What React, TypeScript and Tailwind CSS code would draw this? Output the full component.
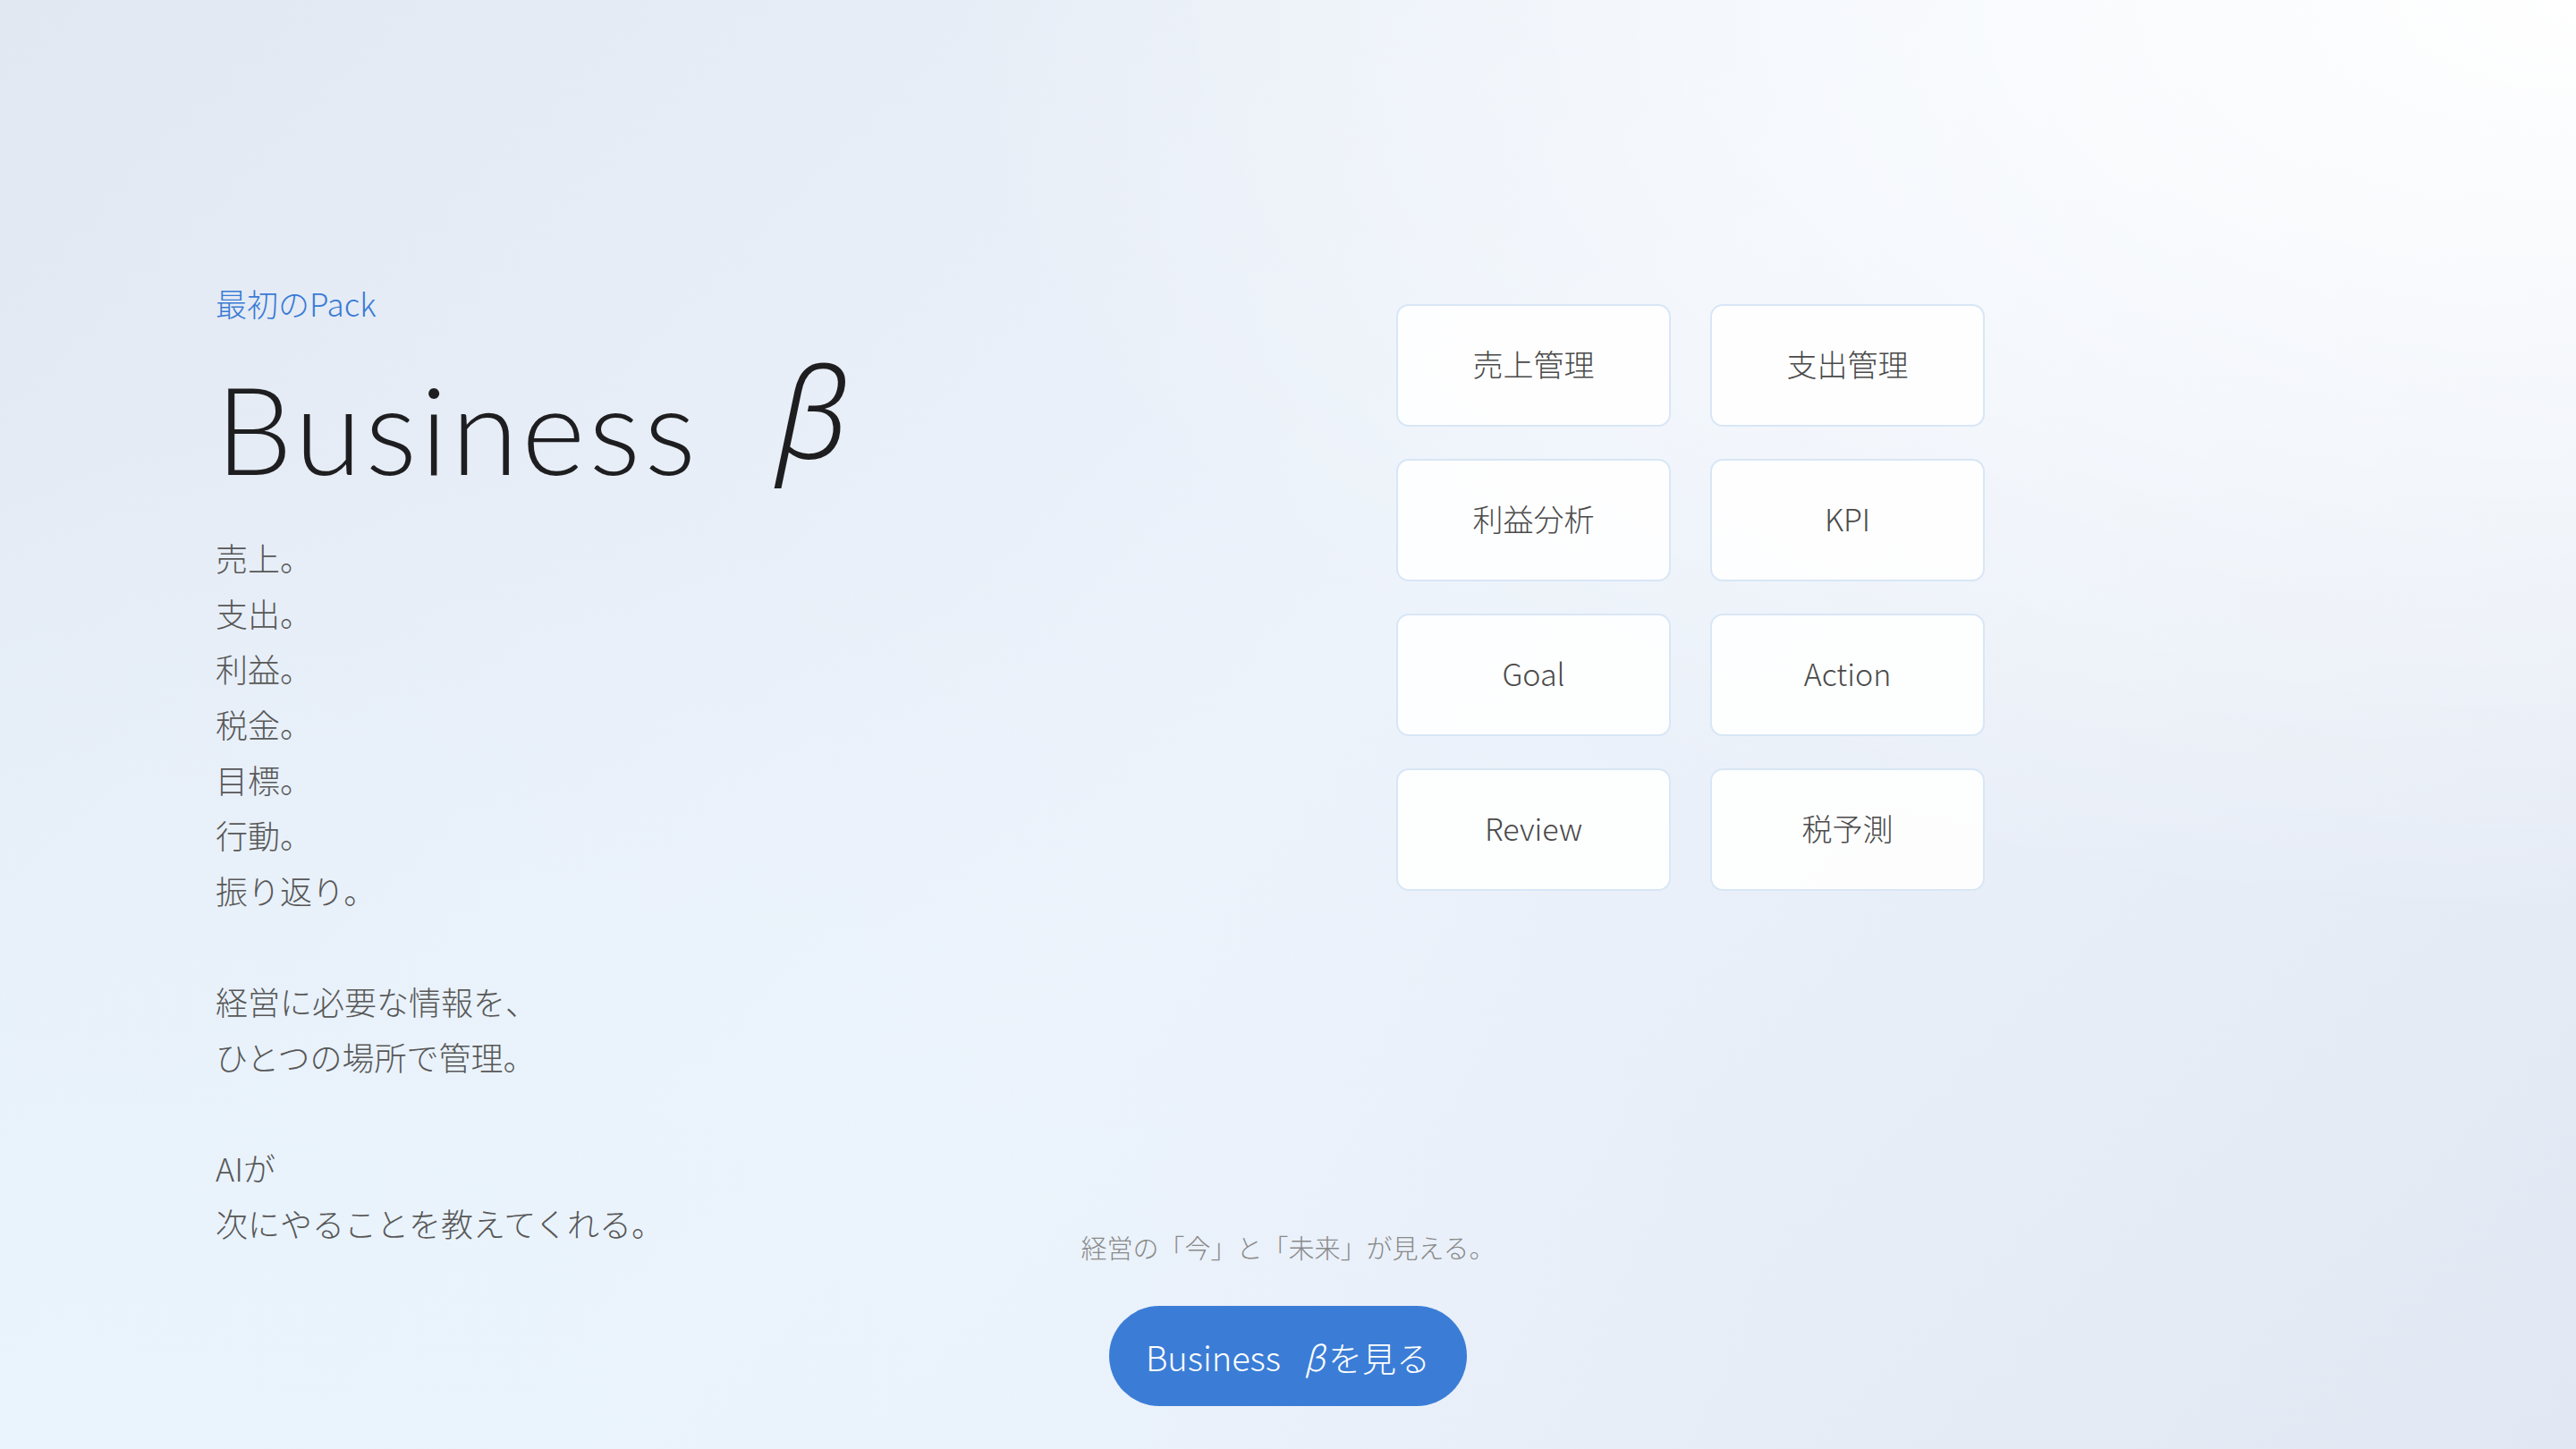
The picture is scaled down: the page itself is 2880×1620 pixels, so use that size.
/**
 * Business β 紹介ページ
 */

const features = ['売上管理', '支出管理', '利益分析', 'KPI', 'Goal', 'Action', 'Review', '税予測'];

const lines = ['売上。', '支出。', '利益。', '税金。', '目標。', '行動。', '振り返り。', '', '経営に必要な情報を、', 'ひとつの場所で管理。', '', 'AIが', '次にやることを教えてくれる。'];

const jp = "font-['Noto_Sans_CJK_JP','Noto_Sans',sans-serif]";

export default function App() {
  return (
    <div
      className={`${jp} flex h-[1620px] w-full flex-col overflow-hidden bg-[radial-gradient(ellipse_at_top_right,#ffffff_0%,rgba(255,255,255,0)_45%),radial-gradient(ellipse_at_bottom_left,#e9f4fd_0%,rgba(233,244,253,0)_50%),linear-gradient(135deg,#e1e8f2_0%,#edf3fb_50%,#e2e8f3_100%)] pt-[314px]`}
    >
      {/* 上段：説明 + 機能カード */}
      <div className="flex min-h-0 flex-1 items-start pl-[241px]">
        <div className="w-[1320px] shrink-0">
          <p className="text-[35px] font-light leading-[50px] text-[#3a7bd5]">最初のPack</p>
          <h1 className="mt-[43px] flex items-baseline font-['Lato','Noto_Sans',sans-serif] text-[136px] font-light leading-none tracking-[0.03em] text-[#1e1e20]">
            <span>Business</span>
            <span className="relative -top-[18px] ml-[86px] font-['Noto_Sans','DejaVu_Sans',sans-serif] text-[140px] italic tracking-normal">β</span>
          </h1>
          <div className="mt-[45px] text-[36px] font-light leading-[62px] text-[#585858]">
            {lines.map((line, i) => (
              <p key={i} className="h-[62px]">{line}</p>
            ))}
          </div>
        </div>

        <div className="mt-[26px] grid grid-cols-[307px_307px] gap-x-[44px] gap-y-[36px]">
          {features.map((f) => (
            <div
              key={f}
              className="flex h-[137px] items-center justify-center rounded-[14px] border-2 border-[#d8e6f6] bg-white/90 pb-[4px] text-[34px] font-light text-[#4a4a4a]"
            >
              {f}
            </div>
          ))}
        </div>
      </div>

      {/* 下段：タグライン + ボタン */}
      <div className="flex flex-col items-center pb-[48px]">
        <p className="text-[29px] font-light leading-[40px] text-[#8a8a8a]">経営の「今」と「未来」が見える。</p>
        <button className="mt-[46px] flex h-[112px] w-[400px] items-center justify-center rounded-full bg-[#3b7dd6] text-[38px] font-light text-white">
          Business<span className="ml-[26px] mr-[4px] italic">β</span>を見る
        </button>
      </div>
    </div>
  );
}
